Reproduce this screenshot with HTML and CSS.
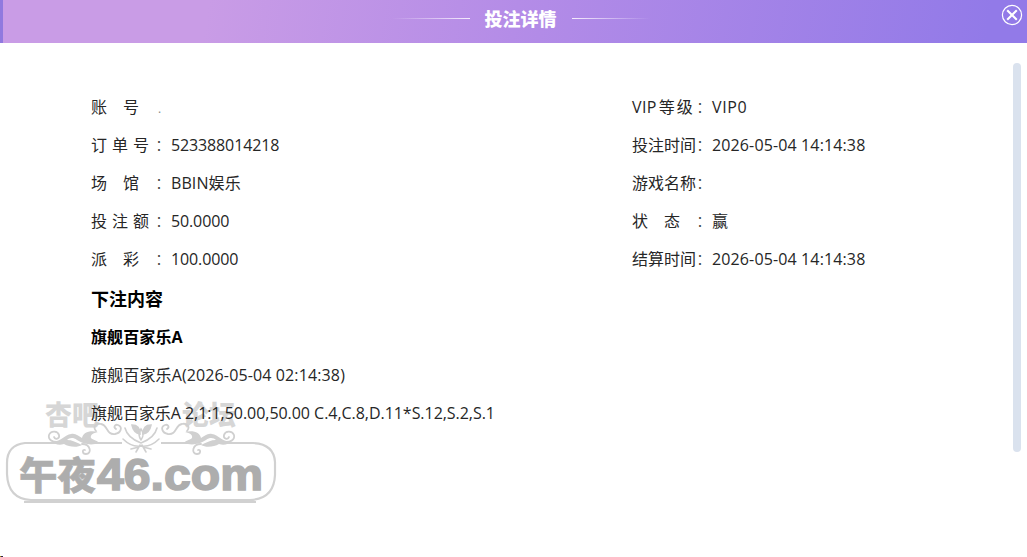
FILE: index.html
```html
<!DOCTYPE html>
<html lang="zh-CN">
<head>
<meta charset="utf-8">
<title>投注详情</title>
<link rel="stylesheet" href="styles.css">
</head>
<body>
<header class="bar">
  <span class="line line-left"></span>
  <h1 class="title">投注详情</h1>
  <span class="line line-right"></span>
  <svg class="close" viewBox="0 0 22 22"><circle cx="11" cy="11" r="9.6"/><path d="M6.2 6.2L15.8 15.8M15.8 6.2L6.2 15.8"/></svg>
</header>
<svg class="watermark" viewBox="0 0 290 115">
  <g class="forum">
    <text x="45" y="35" textLength="54">杏吧</text>
    <text x="182" y="35" textLength="54">论坛</text>
  </g>
  <path class="frame" d="M68 53H25Q7 55 7 73V84Q8 109 31 110H250Q274 109 275 85V72Q274 54 253 53H215M94 53H122M161 53H189"/>
  <path class="shade" d="M24 112H256"/>
  <g class="flourish">
    <g id="wing">
      <path class="vine" d="M62 51C52 54 48 49 49 45C51 40 58 41 59 45C60 49 55 50 54 47M82 54C91 54 92 64 86 64C82 64 82 59 85 60M96 41C92 36 97 33 101 34C108 35 106 45 115 44C121 43 123 37 118 35C115 34 113 37 116 39"/>
      <path class="leaf" d="M52 51C60 53 64 45 71 44C76 43 78 46 82 48C83 43 89 40 98 42C93 43 90 45 91 48C93 50 97 50 99 53C91 56 83 54 77 50C73 47 69 48 67 50C72 50 76 52 82 55C77 58 69 57 64 54C59 56 54 54 52 51Z"/>
    </g>
    <use href="#wing" transform="translate(283 0) scale(-1 1)"/>
    <g class="bloom">
      <path d="M141 53C133 50 127 46 125 38M141 53C149 50 155 46 157 38M141 56C134 57 128 54 123 49M141 56C148 57 154 54 159 49M141 50C137 44 140 41 141 39C144 43 144 46 141 50M139 57L131 59M143 57L151 59M140 55L136 62M142 55L146 62"/>
      <path class="leaf" d="M132 35C138 35 140 39 140 44C135 43 133 40 132 35ZM151 35C145 35 143 39 143 44C148 43 150 40 151 35Z"/>
    </g>
  </g>
  <g class="site">
    <text x="19" y="99" textLength="77" lengthAdjust="spacingAndGlyphs" class="site-cjk">午夜</text>
    <text x="97" y="100" textLength="166" lengthAdjust="spacingAndGlyphs" class="site-latin">46.com</text>
  </g>
</svg>
<main class="content">
  <div class="columns">
    <dl class="col">
      <div class="row"><dt>账&emsp;号</dt><dd class="faint">.</dd></div>
      <div class="row"><dt class="three">订单号</dt><dd class="colon">：</dd><dd>523388014218</dd></div>
      <div class="row"><dt>场&emsp;馆</dt><dd class="colon">：</dd><dd class="mixed">BBIN娱乐</dd></div>
      <div class="row"><dt class="three">投注额</dt><dd class="colon">：</dd><dd>50.0000</dd></div>
      <div class="row"><dt>派&emsp;彩</dt><dd class="colon">：</dd><dd>100.0000</dd></div>
    </dl>
    <dl class="col">
      <div class="row"><dt class="vip">VIP<span class="wide">等级</span></dt><dd class="colon">：</dd><dd class="level">VIP0</dd></div>
      <div class="row"><dt>投注时间</dt><dd class="colon">：</dd><dd class="time">2026-05-04 14:14:38</dd></div>
      <div class="row"><dt>游戏名称</dt><dd class="colon">：</dd></div>
      <div class="row"><dt>状&emsp;态</dt><dd class="colon">：</dd><dd>赢</dd></div>
      <div class="row"><dt>结算时间</dt><dd class="colon">：</dd><dd class="time">2026-05-04 14:14:38</dd></div>
    </dl>
  </div>
  <h2 class="section">下注内容</h2>
  <h3 class="game">旗舰百家乐A</h3>
  <p class="row time">旗舰百家乐A(2026-05-04 02:14:38)</p>
  <p class="row bet">旗舰百家乐A 2,1:1,50.00,50.00 C.4,C.8,D.11*S.12,S.2,S.1</p>
</main>
<div class="scrollbar"></div>
<div class="corner"></div>
</body>
</html>
```
FILE: styles.css
```css
* { box-sizing: border-box; margin: 0; padding: 0; }
body {
  position: relative;
  width: 1027px;
  height: 557px;
  overflow: hidden;
  background: #fff;
  color: #262626;
  font: 16px/38px "Open Sans", "Noto Sans CJK SC", sans-serif;
  letter-spacing: -0.13px;
}
.bar {
  position: relative;
  display: flex;
  justify-content: center;
  gap: 15px;
  height: 43px;
  padding-left: 11px;
  border-left: 3px solid #9079df;
  background: linear-gradient(100deg, #c99ce6 0%, #c99ce6 20%, #b48ce7 50%, #927ae8 96%);
}
.title {
  color: #fff;
  font: 900 18px/36px "Noto Sans CJK SC", sans-serif;
  letter-spacing: 0;
}
.line { width: 78px; height: 1px; margin-top: 18px; }
.line-left { background: linear-gradient(90deg, transparent, #f5ecfc); }
.line-right { background: linear-gradient(90deg, #f5ecfc, transparent); }
.close {
  position: absolute;
  top: 4px;
  right: 4px;
  width: 22px;
  height: 22px;
  fill: none;
  stroke: #fff;
  stroke-width: 1.2;
}
.close path { stroke-width: 2.1; }
.content { position: relative; padding: 45px 0 0 91px; }
.columns { display: grid; grid-template-columns: 541px 1fr; }
.row { display: flex; height: 38px; white-space: pre; }
dt { width: 64px; letter-spacing: 0; }
.three { letter-spacing: 5px; }
.vip { letter-spacing: 0.4px; }
.wide { margin-left: 2px; letter-spacing: 2px; }
.colon { width: 16px; color: #444; font-family: "Noto Sans CJK SC", sans-serif; font-weight: 300; line-height: 36px; }
.mixed { letter-spacing: 0.1px; }
.level { letter-spacing: 0.6px; }
.time { letter-spacing: 0.13px; }
.faint { padding-left: 3px; color: #888; font-size: 12px; line-height: 42px; }
.section { color: #000; font: 700 18px/41px "Noto Sans CJK SC", sans-serif; letter-spacing: 0; }
.game { height: 37px; color: #000; font-size: 16px; line-height: 36px; letter-spacing: 0.1px; }
.bet { letter-spacing: -0.04px; }
.watermark { position: absolute; left: 0; top: 390px; width: 290px; height: 115px; }
.forum { fill: #d6d6d6; font: 900 27px "Noto Sans CJK SC", sans-serif; letter-spacing: 0; }
.frame { fill: none; stroke: #d1d1d1; stroke-width: 2.2; }
.shade { stroke: #c2c2c2; stroke-width: 1.5; }
.vine { fill: none; stroke: #d0d0d0; stroke-width: 1.8; stroke-linecap: round; }
.bloom { fill: none; stroke: #d0d0d0; stroke-width: 1.6; stroke-linecap: round; }
.leaf { fill: #d0d0d0; }
.site { fill: #adadad; stroke: #adadad; letter-spacing: 0; }
.site-cjk { font: 900 38px "Noto Sans CJK SC", sans-serif; stroke-width: 0.6; }
.site-latin { font: 700 45px "Liberation Sans", sans-serif; stroke-width: 1.6; }
.scrollbar {
  position: absolute;
  top: 63px;
  left: 1013px;
  width: 8px;
  height: 389px;
  border-radius: 4px;
  background: #dae2ee;
}
.corner { position: absolute; left: 0; bottom: 0; width: 3px; height: 1px; background: linear-gradient(90deg, #a09000 50%, #302050 50%); }
```
